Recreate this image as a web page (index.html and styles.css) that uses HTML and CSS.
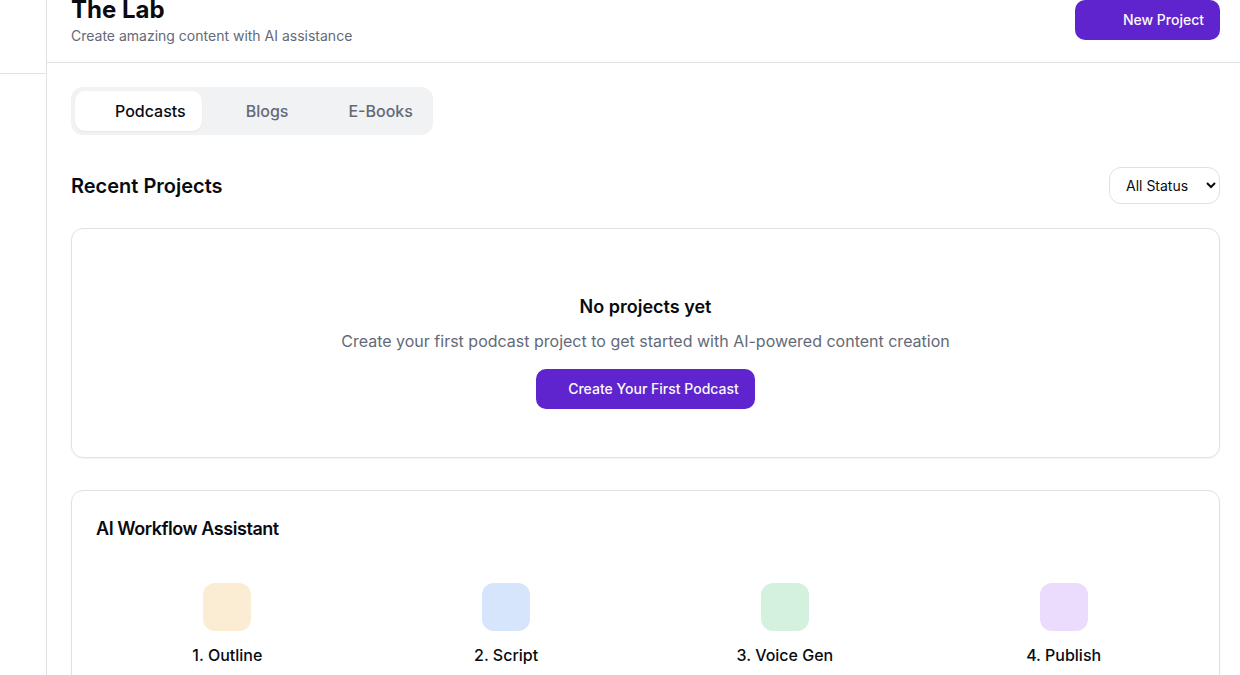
FILE: index.html
```html
<!DOCTYPE html>
<html lang="en">
<head>
<meta charset="utf-8">
<title>The Lab</title>
<link rel="stylesheet" href="styles.css">
</head>
<body>
<div class="app">
  <aside class="sidebar"><div class="sidebar-head"></div></aside>
  <main class="main">
    <header class="header">
      <div>
        <h1 class="title">The Lab</h1>
        <p class="subtitle">Create amazing content with AI assistance</p>
      </div>
      <button class="btn btn-new">New Project</button>
    </header>
    <div class="content">
      <nav class="tabs">
        <button class="tab tab-active">Podcasts</button>
        <button class="tab">Blogs</button>
        <button class="tab">E-Books</button>
      </nav>
      <div class="section-head">
        <h2 class="section-title">Recent Projects</h2>
        <select class="status"><option>All Status</option><option>Completed</option></select>
      </div>
      <section class="card empty">
        <h3 class="empty-title">No projects yet</h3>
        <p class="empty-text">Create your first podcast project to get started with AI-powered content creation</p>
        <button class="btn btn-create">Create Your First Podcast</button>
      </section>
      <section class="card workflow">
        <h3 class="workflow-title">AI Workflow Assistant</h3>
        <div class="steps">
          <div class="step"><div class="tile amber"></div><h4 class="step-title">1. Outline</h4></div>
          <div class="step"><div class="tile blue"></div><h4 class="step-title">2. Script</h4></div>
          <div class="step"><div class="tile green"></div><h4 class="step-title">3. Voice Gen</h4></div>
          <div class="step"><div class="tile purple"></div><h4 class="step-title">4. Publish</h4></div>
        </div>
      </section>
    </div>
  </main>
</div>
</body>
</html>
```
FILE: styles.css
```css
* { box-sizing: border-box; margin: 0; padding: 0; }
body { font-family: Inter, sans-serif; font-size: 16px; line-height: 24px; color: #090b11; background: #fff; overflow: hidden; }
button, select { font: inherit; color: inherit; border: 0; background: none; }
.app { display: flex; height: 675px; overflow: hidden; }
.sidebar { width: 47px; flex: none; border-right: 1px solid #e1e1e8; }
.sidebar-head { height: 74px; border-bottom: 1px solid #e1e1e8; }
.main { flex: 1; min-width: 0; }
.header { height: 63px; padding: 0 20px 0 24px; display: flex; justify-content: space-between; align-items: flex-start; border-bottom: 1px solid #e1e1e8; }
.title { font-size: 24px; line-height: 32px; font-weight: 700; letter-spacing: 0; margin-top: -6px; }
.subtitle { font-size: 14px; line-height: 20px; color: #646978; }
.btn { height: 40px; border-radius: 10px; background: #5f24cd; color: #fafafa; font-size: 14px; line-height: 20px; font-weight: 500; }
.btn-new { padding: 0 16px 0 48px; }
.content { padding: 24px 20px 0 24px; }
.tabs { display: flex; gap: 4px; width: max-content; height: 48px; padding: 4px; border-radius: 12px; background: #f1f2f4; }
.tab { padding: 8px 16px 8px 40px; border-radius: 10px; font-weight: 500; color: #646978; }
.tab-active { background: #fff; color: #090b11; box-shadow: 0 1px 2px rgba(0,0,0,.05); }
.section-head { display: flex; justify-content: space-between; align-items: center; margin: 32px 0 24px; height: 37px; }
.section-title { font-size: 20px; line-height: 28px; font-weight: 600; }
.status { width: 111px; height: 37px; padding: 0 12px; font-size: 14px; border: 1px solid #e1e1e5; border-radius: 12px; background: #fff; }
.card { border: 1px solid #e1e1e5; border-radius: 12px; box-shadow: 0 1px 2px rgba(0,0,0,.05); }
.empty { height: 230px; padding-top: 64px; display: flex; flex-direction: column; align-items: center; }
.empty-title { font-size: 18px; line-height: 28px; font-weight: 600; margin-bottom: 8px; }
.empty-text { color: #646978; margin-bottom: 16px; }
.btn-create { padding: 0 16px 0 32px; }
.workflow { margin-top: 32px; padding: 24px; height: 260px; }
.workflow-title { font-size: 18px; line-height: 28px; font-weight: 600; letter-spacing: -0.45px; }
.steps { display: grid; grid-template-columns: repeat(4, 1fr); gap: 16px; margin-top: 24px; }
.step { padding: 16px; display: flex; flex-direction: column; align-items: center; }
.tile { width: 48px; height: 48px; border-radius: 12px; margin-bottom: 12px; }
.step-title { font-size: 16px; font-weight: 500; }
.amber { background: #faedd4; }
.blue { background: #d6e4fc; }
.green { background: #d3f1de; }
.purple { background: #ebdcfd; }
```
